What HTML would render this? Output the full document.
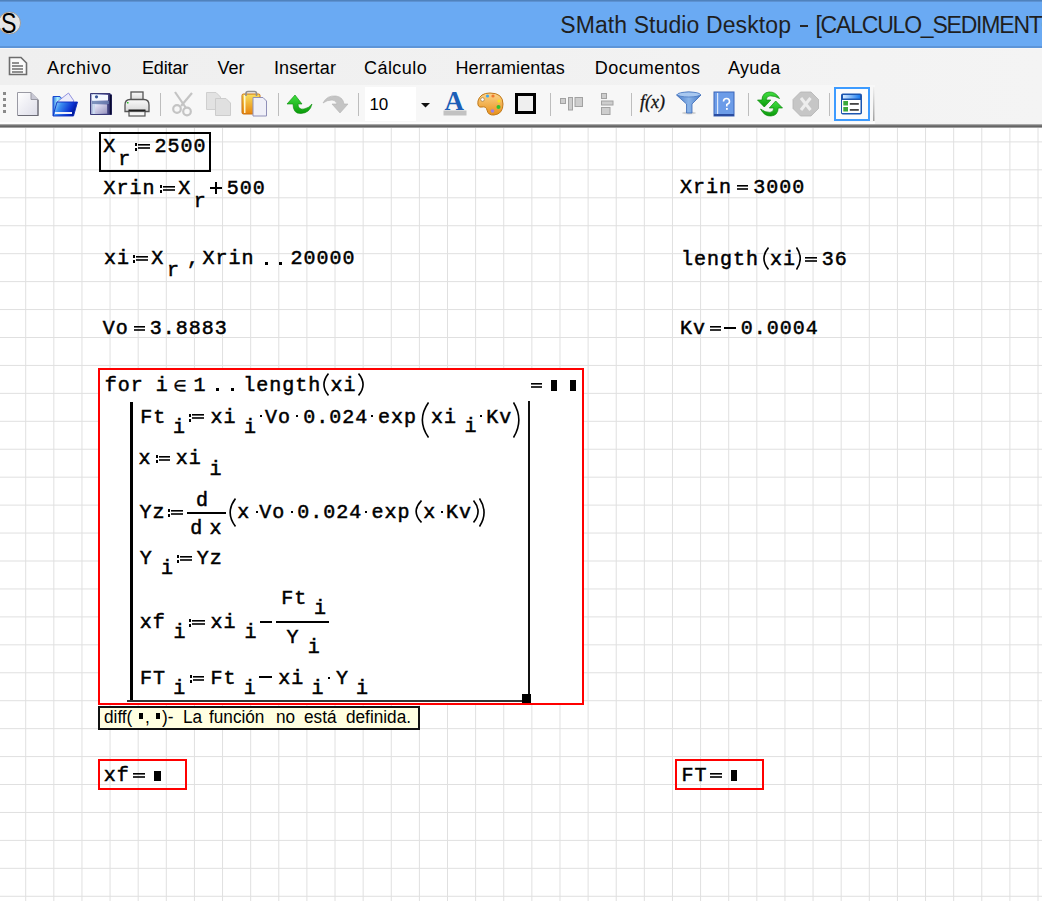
<!DOCTYPE html><html><head><meta charset="utf-8"><style>
html,body{margin:0;padding:0;width:1042px;height:901px;overflow:hidden;background:#fff;position:relative}
.t{position:absolute;white-space:pre}
.m{-webkit-text-stroke:0.5px #000}
.r{position:absolute;box-sizing:content-box}
</style></head><body>
<svg class="r" style="left:0;top:0" width="1042" height="901"><g fill="#e0e0e0"><rect x="25.20" y="128" width="1" height="773"/><rect x="53.32" y="128" width="1" height="773"/><rect x="81.44" y="128" width="1" height="773"/><rect x="109.56" y="128" width="1" height="773"/><rect x="137.68" y="128" width="1" height="773"/><rect x="165.80" y="128" width="1" height="773"/><rect x="193.92" y="128" width="1" height="773"/><rect x="222.04" y="128" width="1" height="773"/><rect x="250.16" y="128" width="1" height="773"/><rect x="278.28" y="128" width="1" height="773"/><rect x="306.40" y="128" width="1" height="773"/><rect x="334.52" y="128" width="1" height="773"/><rect x="362.64" y="128" width="1" height="773"/><rect x="390.76" y="128" width="1" height="773"/><rect x="418.88" y="128" width="1" height="773"/><rect x="447.00" y="128" width="1" height="773"/><rect x="475.12" y="128" width="1" height="773"/><rect x="503.24" y="128" width="1" height="773"/><rect x="531.36" y="128" width="1" height="773"/><rect x="559.48" y="128" width="1" height="773"/><rect x="587.60" y="128" width="1" height="773"/><rect x="615.72" y="128" width="1" height="773"/><rect x="643.84" y="128" width="1" height="773"/><rect x="671.96" y="128" width="1" height="773"/><rect x="700.08" y="128" width="1" height="773"/><rect x="728.20" y="128" width="1" height="773"/><rect x="756.32" y="128" width="1" height="773"/><rect x="784.44" y="128" width="1" height="773"/><rect x="812.56" y="128" width="1" height="773"/><rect x="840.68" y="128" width="1" height="773"/><rect x="868.80" y="128" width="1" height="773"/><rect x="896.92" y="128" width="1" height="773"/><rect x="925.04" y="128" width="1" height="773"/><rect x="953.16" y="128" width="1" height="773"/><rect x="981.28" y="128" width="1" height="773"/><rect x="1009.40" y="128" width="1" height="773"/><rect x="1037.52" y="128" width="1" height="773"/><rect x="0" y="141.40" width="1042" height="1"/><rect x="0" y="169.34" width="1042" height="1"/><rect x="0" y="197.28" width="1042" height="1"/><rect x="0" y="225.22" width="1042" height="1"/><rect x="0" y="253.16" width="1042" height="1"/><rect x="0" y="281.10" width="1042" height="1"/><rect x="0" y="309.04" width="1042" height="1"/><rect x="0" y="336.98" width="1042" height="1"/><rect x="0" y="364.92" width="1042" height="1"/><rect x="0" y="392.86" width="1042" height="1"/><rect x="0" y="420.80" width="1042" height="1"/><rect x="0" y="448.74" width="1042" height="1"/><rect x="0" y="476.68" width="1042" height="1"/><rect x="0" y="504.62" width="1042" height="1"/><rect x="0" y="532.56" width="1042" height="1"/><rect x="0" y="560.50" width="1042" height="1"/><rect x="0" y="588.44" width="1042" height="1"/><rect x="0" y="616.38" width="1042" height="1"/><rect x="0" y="644.32" width="1042" height="1"/><rect x="0" y="672.26" width="1042" height="1"/><rect x="0" y="700.20" width="1042" height="1"/><rect x="0" y="728.14" width="1042" height="1"/><rect x="0" y="756.08" width="1042" height="1"/><rect x="0" y="784.02" width="1042" height="1"/><rect x="0" y="811.96" width="1042" height="1"/><rect x="0" y="839.90" width="1042" height="1"/><rect x="0" y="867.84" width="1042" height="1"/><rect x="0" y="895.78" width="1042" height="1"/></g></svg>
<div class="r" style="left:0px;top:0px;width:1042px;height:47px;background:#6aaaf3;"></div>
<div class="r" style="left:0px;top:0px;width:1042px;height:1px;background:#4f82bd;"></div>
<div class="r" style="left:0px;top:1px;width:1042px;height:1px;background:#5d92d2;"></div>
<div class="r" style="left:0px;top:46px;width:1042px;height:2px;background:#5d95d8;"></div>
<svg class="r" style="left:0;top:11px" width="24" height="24"><circle cx="9.5" cy="12" r="11" fill="#e6e6e6" stroke="#9a8f86" stroke-width="0.8"/></svg>
<span class="t" style="left:1px;top:5.5px;font-family:Liberation Sans;font-size:29px;line-height:34px;color:#000;transform:scaleX(0.8);transform-origin:0 0">S</span>
<span class="t" style="left:560.2px;top:13.5px;font-family:'Liberation Sans', sans-serif;font-size:23px;line-height:23px;letter-spacing:0.1px;color:#1f1f1f;">SMath Studio Desktop</span>
<div class="r" style="left:800px;top:25px;width:8px;height:2px;background:#262626;"></div>
<span class="t" style="left:815.4px;top:13.5px;font-family:'Liberation Sans', sans-serif;font-size:23px;line-height:23px;letter-spacing:-1.2px;color:#1f1f1f;">[CALCULO_SEDIMENTOS.sm]</span>
<div class="r" style="left:0px;top:48px;width:1042px;height:76px;background:#f0f0f0;background:linear-gradient(90deg,#efefef 0%,#f1f1f1 50%,#f4f4f4 100%)"></div>
<div class="r" style="left:0px;top:48px;width:1042px;height:1px;background:#f7f7f7;"></div>
<svg class="r" style="left:8px;top:56px" width="20" height="20"><path d="M1.5,1.5 H13 L18.5,7 V18.5 H1.5 Z" fill="#fafafa" stroke="#6d6d6d" stroke-width="1.6"/><path d="M4,7 H11 M4,10 H15 M4,13 H15 M4,16 H15" stroke="#6d6d6d" stroke-width="1.4"/></svg>
<span class="t" style="left:47.0px;top:59.0px;font-family:'Liberation Sans', sans-serif;font-size:18px;line-height:18px;letter-spacing:0.65px;color:#000;">Archivo</span>
<span class="t" style="left:142.0px;top:59.0px;font-family:'Liberation Sans', sans-serif;font-size:18px;line-height:18px;letter-spacing:-0.15px;color:#000;">Editar</span>
<span class="t" style="left:217.4px;top:59.0px;font-family:'Liberation Sans', sans-serif;font-size:18px;line-height:18px;letter-spacing:0px;color:#000;">Ver</span>
<span class="t" style="left:273.9px;top:59.0px;font-family:'Liberation Sans', sans-serif;font-size:18px;line-height:18px;letter-spacing:0.14px;color:#000;">Insertar</span>
<span class="t" style="left:364.0px;top:59.0px;font-family:'Liberation Sans', sans-serif;font-size:18px;line-height:18px;letter-spacing:0.45px;color:#000;">Cálculo</span>
<span class="t" style="left:455.4px;top:59.0px;font-family:'Liberation Sans', sans-serif;font-size:18px;line-height:18px;letter-spacing:0.12px;color:#000;">Herramientas</span>
<span class="t" style="left:594.8px;top:59.0px;font-family:'Liberation Sans', sans-serif;font-size:18px;line-height:18px;letter-spacing:0.47px;color:#000;">Documentos</span>
<span class="t" style="left:727.9px;top:59.0px;font-family:'Liberation Sans', sans-serif;font-size:18px;line-height:18px;letter-spacing:0.4px;color:#000;">Ayuda</span>
<div class="r" style="left:0px;top:85px;width:875px;height:38px;background:#f7f7f7;"></div>
<div class="r" style="left:0px;top:122px;width:875px;height:2px;background:#fdfdfd;"></div>
<div class="r" style="left:0px;top:124px;width:1042px;height:1px;background:#a8a8a8;"></div>
<div class="r" style="left:0px;top:125px;width:1042px;height:1px;background:#767676;"></div>
<div class="r" style="left:0px;top:126px;width:1042px;height:1px;background:#646464;"></div>
<div class="r" style="left:0px;top:127px;width:1042px;height:1px;background:#a0a0a0;"></div>
<svg class="r" style="left:0;top:0" width="1042" height="127" viewBox="0 0 1042 127">
<defs>
<linearGradient id="gDoc" x1="0" y1="0" x2="1" y2="1"><stop offset="0" stop-color="#ffffff"/><stop offset="1" stop-color="#dcdce8"/></linearGradient>
<linearGradient id="gFold" x1="0" y1="0" x2="1" y2="0.3"><stop offset="0" stop-color="#b8f0ff"/><stop offset="0.35" stop-color="#3a8cf0"/><stop offset="0.8" stop-color="#0a30d0"/><stop offset="1" stop-color="#001890"/></linearGradient><linearGradient id="gBack" x1="0" y1="0" x2="1" y2="0"><stop offset="0" stop-color="#2a70e0"/><stop offset="0.4" stop-color="#a8f0ff"/><stop offset="1" stop-color="#3a90f0"/></linearGradient>
<linearGradient id="gClip" x1="0" y1="0" x2="0" y2="1"><stop offset="0" stop-color="#f8e060"/><stop offset="1" stop-color="#e8840c"/></linearGradient>
<linearGradient id="gGreen" x1="0" y1="0" x2="0" y2="1"><stop offset="0" stop-color="#40e040"/><stop offset="1" stop-color="#0a9a0a"/></linearGradient>
<linearGradient id="gSave" x1="0" y1="0" x2="1" y2="1"><stop offset="0" stop-color="#e8e8fa"/><stop offset="1" stop-color="#9a96c0"/></linearGradient>
<linearGradient id="gFun" x1="0" y1="0" x2="1" y2="0"><stop offset="0" stop-color="#4a7cc8"/><stop offset="0.5" stop-color="#8ab4e8"/><stop offset="1" stop-color="#4a7cc8"/></linearGradient>
<linearGradient id="gPal" x1="0" y1="0" x2="0" y2="1"><stop offset="0" stop-color="#fcd48a"/><stop offset="1" stop-color="#e8901a"/></linearGradient>
<linearGradient id="gWin" x1="0" y1="0" x2="0" y2="1"><stop offset="0" stop-color="#7ab8f8"/><stop offset="1" stop-color="#1a5cc0"/></linearGradient>
</defs>
<!-- grip -->
<g fill="#8a8a8a"><rect x="3" y="92" width="3" height="3"/><rect x="3" y="98" width="3" height="3"/><rect x="3" y="104" width="3" height="3"/><rect x="3" y="110" width="3" height="3"/></g>
<!-- new doc -->
<path d="M17.5,92.5 H31 L38,99.5 V115.5 H17.5 Z" fill="url(#gDoc)" stroke="#9a9aa4" stroke-width="1"/>
<path d="M31,92.5 V99.5 H38" fill="#c8c8d4" stroke="#9a9aa4" stroke-width="1"/>
<path d="M18,115.5 H38 V100" fill="none" stroke="#6a6a74" stroke-width="1.2"/>
<!-- open folder -->
<path d="M53,96.5 H60 L62,99 H64 V115.5 H53 Z" fill="url(#gBack)" stroke="#1848d0" stroke-width="1"/>
<path d="M57,102 L68.5,93 L74,101 L66,108 Z" fill="#ececfa" stroke="#7a7ad8" stroke-width="0.8"/>
<path d="M53,116 L57,102 H77.5 L73.5,116 Z" fill="url(#gFold)" stroke="#0a28c0" stroke-width="0.9"/>
<rect x="55" y="112" width="17" height="2" fill="#f0f0fa"/>
<!-- save -->
<linearGradient id="gFlop" x1="0" y1="0" x2="1" y2="0"><stop offset="0" stop-color="#8a90c0"/><stop offset="0.15" stop-color="#d0e0f4"/><stop offset="0.75" stop-color="#6a6aa8"/><stop offset="1" stop-color="#0a0a40"/></linearGradient>
<path d="M90.5,93.5 H110 L111.5,95 V114.5 H90.5 Z" fill="url(#gFlop)" stroke="#3a3a78" stroke-width="1"/>
<rect x="92" y="95" width="16" height="5.5" fill="#f4f8ff"/>
<circle cx="96.5" cy="96.8" r="1.6" fill="#3a5898"/>
<rect x="92" y="101" width="17" height="3" fill="#6a80b0" opacity="0.8"/>
<rect x="95" y="104.5" width="12" height="9" fill="url(#gSave)"/>
<rect x="110" y="95" width="1.5" height="19.5" fill="#080830"/>
<!-- print -->
<linearGradient id="gPr" x1="0" y1="0" x2="0" y2="1"><stop offset="0" stop-color="#fafafa"/><stop offset="1" stop-color="#d8d8d8"/></linearGradient>
<rect x="131" y="92" width="12" height="8" fill="url(#gPr)" stroke="#555" stroke-width="1.3"/>
<path d="M125,105 Q125,99.5 130,99.5 H144 Q149,99.5 149,105 V111.5 H125 Z" fill="url(#gPr)" stroke="#555" stroke-width="1.3"/>
<rect x="128.5" y="109.5" width="17" height="2.5" fill="#1a1a1a"/>
<rect x="129" y="111.5" width="16" height="4.5" fill="#f6f6f6" stroke="#555" stroke-width="1.2"/>
<rect x="127" y="102" width="1.5" height="1.5" fill="#2ac02a"/>
<!-- sep -->
<rect x="160" y="93" width="1" height="23" fill="#bdbdbd"/>
<!-- scissors (disabled) -->
<g fill="none" stroke="#c4c4c4" stroke-width="2.2">
<path d="M175,92 L186,108"/><path d="M192,93 L181,106"/>
<circle cx="177" cy="109" r="3.8"/><circle cx="187" cy="111.5" r="3.8"/>
</g>
<!-- copy (disabled) -->
<path d="M206.5,92.5 H216 L220.5,97 V109.5 H206.5 Z" fill="#e2e2e2" stroke="#cfcfcf"/>
<path d="M215.5,98.5 H226 L230.5,103 V115.5 H215.5 Z" fill="#e0e0e0" stroke="#cccccc"/>
<!-- paste -->
<rect x="242" y="94" width="18" height="20" rx="1.5" fill="url(#gClip)" stroke="#c87010" stroke-width="1"/>
<rect x="244" y="95" width="1.5" height="18" fill="#fff8d0"/>
<path d="M246,96 V93.5 Q246,91.5 248,91.5 H254.5 Q256.5,91.5 256.5,93.5 V96" fill="none" stroke="#909090" stroke-width="1.6"/>
<path d="M253,97.5 H263 L266.5,101 V116 H253 Z" fill="#f0f0f8" stroke="#9090b8" stroke-width="1"/>
<!-- sep -->
<rect x="278" y="93" width="1" height="23" fill="#bdbdbd"/>
<!-- undo -->
<path d="M287,104 L295,95 L302,104 H298 Q298,110 304,109 Q309,108 312,104 Q310,113 301,113.5 Q293,114 293,104 Z" fill="url(#gGreen)" stroke="#0a8a0a" stroke-width="0.6"/>
<!-- redo (disabled) -->
<path d="M323,103 Q327,95 336,96 Q343,97 344,104 H348 L340,113 L332,104 H337 Q336,100 332,100 Q327,100 323,103 Z" fill="#c4c4c4" stroke="#b4b4b4" stroke-width="0.6"/>
<!-- sep -->
<rect x="358" y="93" width="1" height="23" fill="#bdbdbd"/>
<!-- combobox -->
<rect x="365" y="87" width="70" height="34" fill="#ffffff"/>
<rect x="416" y="87" width="19" height="34" fill="#f7f7f7"/>
<path d="M421,103 H430 L425.5,107.5 Z" fill="#111"/>
<!-- A -->
<text x="444.4" y="110" font-family="Liberation Serif" font-weight="bold" font-size="27" fill="#1c5fb8">A</text>
<rect x="443.5" y="110.5" width="23" height="5" fill="#c2c2c2"/>
<!-- palette -->
<path d="M478,101 Q480,93 490,93 Q503,93 503,104 Q503,114 494,115 Q488,115.5 487,110 Q486,106 482,107 Q477,108 478,101 Z" fill="url(#gPal)" stroke="#c07818" stroke-width="1"/>
<circle cx="482.5" cy="99.5" r="1.8" fill="#fff" stroke="#8a6a40" stroke-width="0.6"/>
<circle cx="487.5" cy="96" r="1.6" fill="#40a8f0"/><circle cx="493" cy="96" r="1.6" fill="#f07830"/>
<circle cx="499" cy="101" r="1.6" fill="#f8e020"/><circle cx="498.5" cy="107" r="2" fill="#30c030"/><circle cx="492.5" cy="111" r="1.8" fill="#a080e0"/>
<!-- border square -->
<rect x="516.5" y="94.5" width="18" height="18" fill="#efefef" stroke="#000" stroke-width="3"/>
<!-- sep -->
<rect x="550" y="93" width="1" height="23" fill="#bdbdbd"/>
<!-- align h -->
<g fill="#cdcdcd" stroke="#a2a2a2" stroke-width="1">
<rect x="560.5" y="98.5" width="5" height="5"/><rect x="568.5" y="97.5" width="4" height="12.5"/><rect x="575" y="97.5" width="7.5" height="9"/>
</g>
<!-- align v -->
<g fill="#cdcdcd" stroke="#a2a2a2" stroke-width="1">
<rect x="601.5" y="93.5" width="5" height="5"/><rect x="601.5" y="101" width="11.5" height="4"/><rect x="601.5" y="107.5" width="8.5" height="7"/>
</g>
<!-- sep -->
<rect x="631" y="93" width="1" height="23" fill="#bdbdbd"/>
<text x="640" y="108" font-family="Liberation Serif" font-style="italic" font-size="18" fill="#111" stroke="#111" stroke-width="0.3">f(x)</text>
<!-- funnel -->
<ellipse cx="689" cy="113" rx="7" ry="1.5" fill="#b8b8b8" opacity="0.6"/>
<path d="M676.5,95 Q688.5,89 701,95 L692,104 V113 H686.5 V104 Z" fill="url(#gFun)" stroke="#3a6ab8" stroke-width="0.8"/>
<ellipse cx="688.8" cy="94.5" rx="11.5" ry="2.5" fill="#a8c8f0" stroke="#4a78c0" stroke-width="0.8"/>
<!-- help -->
<rect x="714" y="92" width="20" height="24" fill="#6c9ce8" stroke="#3a64b8" stroke-width="1"/>
<rect x="714" y="114" width="20" height="2" fill="#2a4ca0"/>
<rect x="717" y="93" width="1.2" height="21" fill="#dce8fc"/>
<path d="M723.5,101.5 Q723.5,98.5 726.5,98.5 Q729.5,98.5 729.5,101.5 Q729.5,103.5 726.8,104.5 V106.5" fill="none" stroke="#fff" stroke-width="1.6"/>
<rect x="726" y="108" width="1.8" height="1.8" fill="#fff"/>
<!-- sep -->
<rect x="748" y="93" width="1" height="23" fill="#bdbdbd"/>
<!-- refresh -->
<path d="M779.5,98.5 Q775.5,91.5 769,92 Q762,92.8 762,100 H757.5 L764.3,107 L770.8,100 H766.2 Q766.3,96 770,95.8 Q775,95.8 779.5,98.5 Z" fill="url(#gGreen)" stroke="#0a8a0a" stroke-width="0.7"/>
<path d="M760.5,109 Q764.5,116.5 771,116 Q778,115.5 778.2,108 H782.5 L775.7,101 L769.3,108 H773.8 Q773.8,112.2 770,112.4 Q765,112.6 760.5,109 Z" fill="url(#gGreen)" stroke="#0a8a0a" stroke-width="0.7"/>
<!-- stop -->
<path d="M800.5,92 H811 L818.5,99.5 V108.5 L811,116 H800.5 L793,108.5 V99.5 Z" fill="#c6c6c6" stroke="#b4b4b4" stroke-width="0.8"/>
<path d="M801,98 L810.5,110 M810.5,98 L801,110" stroke="#ededed" stroke-width="3"/>
<!-- sep -->
<rect x="829" y="93" width="1" height="23" fill="#bdbdbd"/>
<!-- selected button -->
<rect x="835" y="88" width="34" height="32" fill="#fcfcfc" stroke="#3d9bff" stroke-width="2"/>
<linearGradient id="gHdr" x1="0" y1="0" x2="1" y2="0"><stop offset="0" stop-color="#d8ecff"/><stop offset="1" stop-color="#1a7cf0"/></linearGradient>
<rect x="841" y="93.5" width="21" height="21" rx="1.8" fill="#1c56b0"/>
<rect x="843" y="95" width="17" height="3.5" fill="url(#gHdr)"/>
<rect x="842" y="100" width="18.5" height="13" fill="#ffffff"/>
<rect x="843.3" y="101" width="4.7" height="4.5" fill="#3aa83a"/>
<rect x="843.3" y="107" width="4.7" height="4.5" fill="#3aa83a"/>
<rect x="849.8" y="103" width="9" height="1.8" fill="#444"/>
<rect x="849.8" y="109" width="9" height="1.8" fill="#444"/>
<!-- end -->
<linearGradient id="gEnd" x1="0" y1="0" x2="0" y2="1"><stop offset="0" stop-color="#f0f0f0"/><stop offset="1" stop-color="#a0a0a0"/></linearGradient><rect x="873" y="87" width="1.5" height="34" fill="url(#gEnd)"/>
</svg>

<span class="t" style="left:369.4px;top:96.0px;font-family:'Liberation Sans', sans-serif;font-size:17px;line-height:17px;letter-spacing:0px;color:#000;">10</span>
<div class="r" style="left:99px;top:132px;width:108px;height:36px;border:2px solid #000;background:transparent"></div>
<span class="t m" style="left:103.2px;top:137.0px;font-family:'Liberation Mono', monospace;font-size:20px;line-height:20px;letter-spacing:1px;color:#000;">X</span>
<span class="t m" style="left:118.2px;top:150.0px;font-family:'Liberation Mono', monospace;font-size:20px;line-height:20px;letter-spacing:1px;color:#000;">r</span>
<div class="r" style="left:135px;top:143px;width:2px;height:3px;background:#000;"></div>
<div class="r" style="left:135px;top:148px;width:2px;height:3px;background:#000;"></div>
<svg class="r" style="left:138px;top:143px" width="12" height="6"><rect x="0" y="1" width="12" height="1.6" fill="#000"/><rect x="0" y="4.2" width="12" height="1.6" fill="#000"/></svg>
<span class="t m" style="left:154.5px;top:137.0px;font-family:'Liberation Mono', monospace;font-size:20px;line-height:20px;letter-spacing:1px;color:#000;">2500</span>
<span class="t m" style="left:103.5px;top:179.0px;font-family:'Liberation Mono', monospace;font-size:20px;line-height:20px;letter-spacing:1px;color:#000;">Xrin</span>
<div class="r" style="left:160px;top:185px;width:2px;height:3px;background:#000;"></div>
<div class="r" style="left:160px;top:190px;width:2px;height:3px;background:#000;"></div>
<svg class="r" style="left:163px;top:185px" width="12" height="6"><rect x="0" y="1" width="12" height="1.6" fill="#000"/><rect x="0" y="4.2" width="12" height="1.6" fill="#000"/></svg>
<span class="t m" style="left:178.3px;top:179.0px;font-family:'Liberation Mono', monospace;font-size:20px;line-height:20px;letter-spacing:1px;color:#000;">X</span>
<span class="t m" style="left:193.8px;top:191.5px;font-family:'Liberation Mono', monospace;font-size:20px;line-height:20px;letter-spacing:1px;color:#000;">r</span>
<div class="r" style="left:210px;top:187px;width:12px;height:2px;background:#000;"></div>
<div class="r" style="left:215px;top:182px;width:2px;height:12px;background:#000;"></div>
<span class="t m" style="left:226.7px;top:179.0px;font-family:'Liberation Mono', monospace;font-size:20px;line-height:20px;letter-spacing:1px;color:#000;">500</span>
<span class="t m" style="left:104.0px;top:249.0px;font-family:'Liberation Mono', monospace;font-size:20px;line-height:20px;letter-spacing:1px;color:#000;">xi</span>
<div class="r" style="left:133px;top:255px;width:2px;height:3px;background:#000;"></div>
<div class="r" style="left:133px;top:260px;width:2px;height:3px;background:#000;"></div>
<svg class="r" style="left:136px;top:255px" width="12" height="6"><rect x="0" y="1" width="12" height="1.6" fill="#000"/><rect x="0" y="4.2" width="12" height="1.6" fill="#000"/></svg>
<span class="t m" style="left:151.2px;top:249.0px;font-family:'Liberation Mono', monospace;font-size:20px;line-height:20px;letter-spacing:1px;color:#000;">X</span>
<span class="t m" style="left:167.0px;top:260.6px;font-family:'Liberation Mono', monospace;font-size:20px;line-height:20px;letter-spacing:1px;color:#000;">r</span>
<span class="t m" style="left:187.0px;top:249.0px;font-family:'Liberation Mono', monospace;font-size:20px;line-height:20px;letter-spacing:1px;color:#000;">,</span>
<span class="t m" style="left:202.4px;top:249.0px;font-family:'Liberation Mono', monospace;font-size:20px;line-height:20px;letter-spacing:1px;color:#000;">Xrin</span>
<div class="r" style="left:265px;top:262px;width:3px;height:3px;background:#000;"></div>
<div class="r" style="left:279px;top:262px;width:3px;height:3px;background:#000;"></div>
<span class="t m" style="left:290.5px;top:249.0px;font-family:'Liberation Mono', monospace;font-size:20px;line-height:20px;letter-spacing:1px;color:#000;">20000</span>
<span class="t m" style="left:102.7px;top:319.0px;font-family:'Liberation Mono', monospace;font-size:20px;line-height:20px;letter-spacing:1px;color:#000;">Vo</span>
<svg class="r" style="left:134px;top:325px" width="11" height="6"><rect x="0" y="1" width="11" height="1.6" fill="#000"/><rect x="0" y="4.2" width="11" height="1.6" fill="#000"/></svg>
<span class="t m" style="left:149.8px;top:319.0px;font-family:'Liberation Mono', monospace;font-size:20px;line-height:20px;letter-spacing:1px;color:#000;">3.8883</span>
<span class="t m" style="left:680.0px;top:178.0px;font-family:'Liberation Mono', monospace;font-size:20px;line-height:20px;letter-spacing:1px;color:#000;">Xrin</span>
<svg class="r" style="left:737px;top:184px" width="11" height="6"><rect x="0" y="1" width="11" height="1.6" fill="#000"/><rect x="0" y="4.2" width="11" height="1.6" fill="#000"/></svg>
<span class="t m" style="left:753.3px;top:178.0px;font-family:'Liberation Mono', monospace;font-size:20px;line-height:20px;letter-spacing:1px;color:#000;">3000</span>
<span class="t m" style="left:680.9px;top:250.0px;font-family:'Liberation Mono', monospace;font-size:20px;line-height:20px;letter-spacing:1px;color:#000;">length</span>
<svg class="r" style="left:763px;top:247px" width="6" height="23"><path d="M5.5,0.5 Q-3.5999999999999996,11.5 5.5,22.5" fill="none" stroke="#000" stroke-width="1.6"/></svg>
<span class="t m" style="left:769.9px;top:250.0px;font-family:'Liberation Mono', monospace;font-size:20px;line-height:20px;letter-spacing:1px;color:#000;">xi</span>
<svg class="r" style="left:796px;top:247px" width="5" height="23"><path d="M0.5,0.5 Q8.0,11.5 0.5,22.5" fill="none" stroke="#000" stroke-width="1.6"/></svg>
<svg class="r" style="left:805px;top:256px" width="12" height="6"><rect x="0" y="1" width="12" height="1.6" fill="#000"/><rect x="0" y="4.2" width="12" height="1.6" fill="#000"/></svg>
<span class="t m" style="left:821.7px;top:250.0px;font-family:'Liberation Mono', monospace;font-size:20px;line-height:20px;letter-spacing:1px;color:#000;">36</span>
<span class="t m" style="left:680.1px;top:319.0px;font-family:'Liberation Mono', monospace;font-size:20px;line-height:20px;letter-spacing:1px;color:#000;">Kv</span>
<svg class="r" style="left:710px;top:325px" width="11" height="6"><rect x="0" y="1" width="11" height="1.6" fill="#000"/><rect x="0" y="4.2" width="11" height="1.6" fill="#000"/></svg>
<div class="r" style="left:724px;top:327px;width:12px;height:2px;background:#000;"></div>
<span class="t m" style="left:740.8px;top:319.0px;font-family:'Liberation Mono', monospace;font-size:20px;line-height:20px;letter-spacing:1px;color:#000;">0.0004</span>
<div class="r" style="left:98px;top:368px;width:482px;height:333px;border:2px solid #ff0000;background:#fff"></div>
<span class="t m" style="left:104.7px;top:376.0px;font-family:'Liberation Mono', monospace;font-size:20px;line-height:20px;letter-spacing:1px;color:#000;">for</span>
<span class="t m" style="left:155.8px;top:376.0px;font-family:'Liberation Mono', monospace;font-size:20px;line-height:20px;letter-spacing:1px;color:#000;">i</span>
<span class="t m" style="left:173.3px;top:376.0px;font-family:'Liberation Mono', monospace;font-size:20px;line-height:20px;letter-spacing:1px;color:#000;font-family:DejaVu Sans;font-size:15px">∈</span>
<span class="t m" style="left:193.4px;top:376.0px;font-family:'Liberation Mono', monospace;font-size:20px;line-height:20px;letter-spacing:1px;color:#000;">1</span>
<div class="r" style="left:216px;top:388px;width:3px;height:3px;background:#000;"></div>
<div class="r" style="left:231px;top:388px;width:3px;height:3px;background:#000;"></div>
<span class="t m" style="left:243.2px;top:376.0px;font-family:'Liberation Mono', monospace;font-size:20px;line-height:20px;letter-spacing:1px;color:#000;">length</span>
<svg class="r" style="left:323px;top:373px" width="6" height="23"><path d="M5.5,0.5 Q-3.5999999999999996,11.5 5.5,22.5" fill="none" stroke="#000" stroke-width="1.6"/></svg>
<span class="t m" style="left:330.5px;top:376.0px;font-family:'Liberation Mono', monospace;font-size:20px;line-height:20px;letter-spacing:1px;color:#000;">xi</span>
<svg class="r" style="left:358px;top:373px" width="6" height="23"><path d="M0.5,0.5 Q9.600000000000001,11.5 0.5,22.5" fill="none" stroke="#000" stroke-width="1.6"/></svg>
<svg class="r" style="left:531px;top:382px" width="11" height="6"><rect x="0" y="1" width="11" height="1.6" fill="#000"/><rect x="0" y="4.2" width="11" height="1.6" fill="#000"/></svg>
<div class="r" style="left:551px;top:380px;width:6px;height:11px;background:#000;"></div>
<div class="r" style="left:570px;top:380px;width:6px;height:11px;background:#000;"></div>
<div class="r" style="left:130px;top:402px;width:3px;height:300px;background:#000;"></div>
<div class="r" style="left:127px;top:700px;width:401px;height:2px;background:#333;"></div>
<div class="r" style="left:528px;top:401px;width:2px;height:299px;background:#111;"></div>
<div class="r" style="left:522px;top:694px;width:9px;height:9px;background:#000;"></div>
<span class="t m" style="left:140.3px;top:407.5px;font-family:'Liberation Mono', monospace;font-size:20px;line-height:20px;letter-spacing:1px;color:#000;">Ft</span>
<span class="t m" style="left:173.0px;top:418.0px;font-family:'Liberation Mono', monospace;font-size:20px;line-height:20px;letter-spacing:1px;color:#000;">i</span>
<div class="r" style="left:189px;top:413.5px;width:2px;height:3px;background:#000;"></div>
<div class="r" style="left:189px;top:418.5px;width:2px;height:3px;background:#000;"></div>
<svg class="r" style="left:192px;top:413px" width="12" height="6"><rect x="0" y="1" width="12" height="1.6" fill="#000"/><rect x="0" y="4.2" width="12" height="1.6" fill="#000"/></svg>
<span class="t m" style="left:210.4px;top:407.5px;font-family:'Liberation Mono', monospace;font-size:20px;line-height:20px;letter-spacing:1px;color:#000;">xi</span>
<span class="t m" style="left:244.0px;top:418.0px;font-family:'Liberation Mono', monospace;font-size:20px;line-height:20px;letter-spacing:1px;color:#000;">i</span>
<div class="r" style="left:260px;top:415px;width:2px;height:2px;background:#000;"></div>
<span class="t m" style="left:265.0px;top:407.5px;font-family:'Liberation Mono', monospace;font-size:20px;line-height:20px;letter-spacing:1px;color:#000;">Vo</span>
<div class="r" style="left:296px;top:415px;width:2px;height:2px;background:#000;"></div>
<span class="t m" style="left:303.2px;top:407.5px;font-family:'Liberation Mono', monospace;font-size:20px;line-height:20px;letter-spacing:1px;color:#000;">0.024</span>
<div class="r" style="left:371px;top:415px;width:2px;height:2px;background:#000;"></div>
<span class="t m" style="left:378.0px;top:407.5px;font-family:'Liberation Mono', monospace;font-size:20px;line-height:20px;letter-spacing:1px;color:#000;">exp</span>
<svg class="r" style="left:421px;top:402px" width="8" height="36"><path d="M7.5,0.5 Q-4.8,18.0 7.5,35.5" fill="none" stroke="#000" stroke-width="1.6"/></svg>
<span class="t m" style="left:431.0px;top:407.5px;font-family:'Liberation Mono', monospace;font-size:20px;line-height:20px;letter-spacing:1px;color:#000;">xi</span>
<span class="t m" style="left:464.4px;top:417.0px;font-family:'Liberation Mono', monospace;font-size:20px;line-height:20px;letter-spacing:1px;color:#000;">i</span>
<div class="r" style="left:480px;top:415px;width:2px;height:2px;background:#000;"></div>
<span class="t m" style="left:486.3px;top:407.5px;font-family:'Liberation Mono', monospace;font-size:20px;line-height:20px;letter-spacing:1px;color:#000;">Kv</span>
<svg class="r" style="left:513px;top:402px" width="7" height="36"><path d="M0.5,0.5 Q11.200000000000001,18.0 0.5,35.5" fill="none" stroke="#000" stroke-width="1.6"/></svg>
<span class="t m" style="left:138.4px;top:449.0px;font-family:'Liberation Mono', monospace;font-size:20px;line-height:20px;letter-spacing:1px;color:#000;">x</span>
<div class="r" style="left:156px;top:455px;width:2px;height:3px;background:#000;"></div>
<div class="r" style="left:156px;top:460px;width:2px;height:3px;background:#000;"></div>
<svg class="r" style="left:159px;top:455px" width="11" height="6"><rect x="0" y="1" width="11" height="1.6" fill="#000"/><rect x="0" y="4.2" width="11" height="1.6" fill="#000"/></svg>
<span class="t m" style="left:175.8px;top:449.0px;font-family:'Liberation Mono', monospace;font-size:20px;line-height:20px;letter-spacing:1px;color:#000;">xi</span>
<span class="t m" style="left:209.4px;top:459.5px;font-family:'Liberation Mono', monospace;font-size:20px;line-height:20px;letter-spacing:1px;color:#000;">i</span>
<span class="t m" style="left:139.4px;top:503.0px;font-family:'Liberation Mono', monospace;font-size:20px;line-height:20px;letter-spacing:1px;color:#000;">Yz</span>
<div class="r" style="left:168px;top:509px;width:2px;height:3px;background:#000;"></div>
<div class="r" style="left:168px;top:514px;width:2px;height:3px;background:#000;"></div>
<svg class="r" style="left:171px;top:509px" width="12" height="6"><rect x="0" y="1" width="12" height="1.6" fill="#000"/><rect x="0" y="4.2" width="12" height="1.6" fill="#000"/></svg>
<div class="r" style="left:187px;top:512px;width:39px;height:2px;background:#000;"></div>
<span class="t m" style="left:196.0px;top:491.2px;font-family:'Liberation Mono', monospace;font-size:20px;line-height:20px;letter-spacing:1px;color:#000;">d</span>
<span class="t m" style="left:190.2px;top:518.7px;font-family:'Liberation Mono', monospace;font-size:20px;line-height:20px;letter-spacing:1px;color:#000;">d</span>
<span class="t m" style="left:209.4px;top:518.7px;font-family:'Liberation Mono', monospace;font-size:20px;line-height:20px;letter-spacing:1px;color:#000;">x</span>
<svg class="r" style="left:229px;top:498px" width="7" height="29"><path d="M6.5,0.5 Q-4.2,14.5 6.5,28.5" fill="none" stroke="#000" stroke-width="1.6"/></svg>
<span class="t m" style="left:237.2px;top:503.0px;font-family:'Liberation Mono', monospace;font-size:20px;line-height:20px;letter-spacing:1px;color:#000;">x</span>
<div class="r" style="left:256px;top:511px;width:2px;height:2px;background:#000;"></div>
<span class="t m" style="left:259.3px;top:503.0px;font-family:'Liberation Mono', monospace;font-size:20px;line-height:20px;letter-spacing:1px;color:#000;">Vo</span>
<div class="r" style="left:291px;top:511px;width:2px;height:2px;background:#000;"></div>
<span class="t m" style="left:297.2px;top:503.0px;font-family:'Liberation Mono', monospace;font-size:20px;line-height:20px;letter-spacing:1px;color:#000;">0.024</span>
<div class="r" style="left:365px;top:511px;width:2px;height:2px;background:#000;"></div>
<span class="t m" style="left:371.6px;top:503.0px;font-family:'Liberation Mono', monospace;font-size:20px;line-height:20px;letter-spacing:1px;color:#000;">exp</span>
<svg class="r" style="left:415px;top:500px" width="7" height="23"><path d="M6.5,0.5 Q-4.2,11.5 6.5,22.5" fill="none" stroke="#000" stroke-width="1.6"/></svg>
<span class="t m" style="left:423.2px;top:503.0px;font-family:'Liberation Mono', monospace;font-size:20px;line-height:20px;letter-spacing:1px;color:#000;">x</span>
<div class="r" style="left:441px;top:511px;width:2px;height:2px;background:#000;"></div>
<span class="t m" style="left:446.0px;top:503.0px;font-family:'Liberation Mono', monospace;font-size:20px;line-height:20px;letter-spacing:1px;color:#000;">Kv</span>
<svg class="r" style="left:473px;top:500px" width="6" height="23"><path d="M0.5,0.5 Q9.600000000000001,11.5 0.5,22.5" fill="none" stroke="#000" stroke-width="1.6"/></svg>
<svg class="r" style="left:479px;top:498px" width="6" height="29"><path d="M0.5,0.5 Q9.600000000000001,14.5 0.5,28.5" fill="none" stroke="#000" stroke-width="1.6"/></svg>
<span class="t m" style="left:139.8px;top:548.5px;font-family:'Liberation Mono', monospace;font-size:20px;line-height:20px;letter-spacing:1px;color:#000;">Y</span>
<span class="t m" style="left:161.0px;top:559.0px;font-family:'Liberation Mono', monospace;font-size:20px;line-height:20px;letter-spacing:1px;color:#000;">i</span>
<div class="r" style="left:177px;top:554.5px;width:2px;height:3px;background:#000;"></div>
<div class="r" style="left:177px;top:559.5px;width:2px;height:3px;background:#000;"></div>
<svg class="r" style="left:180px;top:555px" width="12" height="6"><rect x="0" y="1" width="12" height="1.6" fill="#000"/><rect x="0" y="4.2" width="12" height="1.6" fill="#000"/></svg>
<span class="t m" style="left:196.8px;top:548.5px;font-family:'Liberation Mono', monospace;font-size:20px;line-height:20px;letter-spacing:1px;color:#000;">Yz</span>
<span class="t m" style="left:139.8px;top:613.0px;font-family:'Liberation Mono', monospace;font-size:20px;line-height:20px;letter-spacing:1px;color:#000;">xf</span>
<span class="t m" style="left:173.6px;top:622.8px;font-family:'Liberation Mono', monospace;font-size:20px;line-height:20px;letter-spacing:1px;color:#000;">i</span>
<div class="r" style="left:189px;top:619px;width:2px;height:3px;background:#000;"></div>
<div class="r" style="left:189px;top:624px;width:2px;height:3px;background:#000;"></div>
<svg class="r" style="left:192px;top:619px" width="13" height="6"><rect x="0" y="1" width="13" height="1.6" fill="#000"/><rect x="0" y="4.2" width="13" height="1.6" fill="#000"/></svg>
<span class="t m" style="left:210.6px;top:613.0px;font-family:'Liberation Mono', monospace;font-size:20px;line-height:20px;letter-spacing:1px;color:#000;">xi</span>
<span class="t m" style="left:244.4px;top:622.8px;font-family:'Liberation Mono', monospace;font-size:20px;line-height:20px;letter-spacing:1px;color:#000;">i</span>
<div class="r" style="left:260px;top:621px;width:12px;height:2px;background:#000;"></div>
<div class="r" style="left:276px;top:621px;width:53px;height:2px;background:#000;"></div>
<span class="t m" style="left:281.3px;top:588.6px;font-family:'Liberation Mono', monospace;font-size:20px;line-height:20px;letter-spacing:1px;color:#000;">Ft</span>
<span class="t m" style="left:314.0px;top:599.2px;font-family:'Liberation Mono', monospace;font-size:20px;line-height:20px;letter-spacing:1px;color:#000;">i</span>
<span class="t m" style="left:286.6px;top:627.7px;font-family:'Liberation Mono', monospace;font-size:20px;line-height:20px;letter-spacing:1px;color:#000;">Y</span>
<span class="t m" style="left:307.7px;top:638.2px;font-family:'Liberation Mono', monospace;font-size:20px;line-height:20px;letter-spacing:1px;color:#000;">i</span>
<span class="t m" style="left:140.0px;top:668.5px;font-family:'Liberation Mono', monospace;font-size:20px;line-height:20px;letter-spacing:1px;color:#000;">FT</span>
<span class="t m" style="left:173.2px;top:679.0px;font-family:'Liberation Mono', monospace;font-size:20px;line-height:20px;letter-spacing:1px;color:#000;">i</span>
<div class="r" style="left:190px;top:674.5px;width:2px;height:3px;background:#000;"></div>
<div class="r" style="left:190px;top:679.5px;width:2px;height:3px;background:#000;"></div>
<svg class="r" style="left:193px;top:675px" width="11" height="6"><rect x="0" y="1" width="11" height="1.6" fill="#000"/><rect x="0" y="4.2" width="11" height="1.6" fill="#000"/></svg>
<span class="t m" style="left:210.6px;top:668.5px;font-family:'Liberation Mono', monospace;font-size:20px;line-height:20px;letter-spacing:1px;color:#000;">Ft</span>
<span class="t m" style="left:243.7px;top:679.0px;font-family:'Liberation Mono', monospace;font-size:20px;line-height:20px;letter-spacing:1px;color:#000;">i</span>
<div class="r" style="left:259px;top:676px;width:13px;height:2px;background:#000;"></div>
<span class="t m" style="left:278.3px;top:668.5px;font-family:'Liberation Mono', monospace;font-size:20px;line-height:20px;letter-spacing:1px;color:#000;">xi</span>
<span class="t m" style="left:311.4px;top:679.0px;font-family:'Liberation Mono', monospace;font-size:20px;line-height:20px;letter-spacing:1px;color:#000;">i</span>
<div class="r" style="left:328px;top:677px;width:2px;height:2px;background:#000;"></div>
<span class="t m" style="left:335.9px;top:668.5px;font-family:'Liberation Mono', monospace;font-size:20px;line-height:20px;letter-spacing:1px;color:#000;">Y</span>
<span class="t m" style="left:356.0px;top:679.0px;font-family:'Liberation Mono', monospace;font-size:20px;line-height:20px;letter-spacing:1px;color:#000;">i</span>
<div class="r" style="left:98px;top:706px;width:318px;height:20px;border:2px solid #111;background:#ffffe1"></div>
<span class="t" style="left:104.2px;top:708.3px;font-family:'Liberation Sans', sans-serif;font-size:18px;line-height:18px;letter-spacing:0px;color:#000;transform:scaleX(0.955);transform-origin:0 0">diff(</span>
<span class="t" style="left:145.0px;top:708.3px;font-family:'Liberation Sans', sans-serif;font-size:18px;line-height:18px;letter-spacing:0px;color:#000;transform:scaleX(0.955);transform-origin:0 0">,</span>
<span class="t" style="left:161.8px;top:708.3px;font-family:'Liberation Sans', sans-serif;font-size:18px;line-height:18px;letter-spacing:0px;color:#000;transform:scaleX(0.955);transform-origin:0 0">)-</span>
<span class="t" style="left:182.6px;top:708.3px;font-family:'Liberation Sans', sans-serif;font-size:18px;line-height:18px;letter-spacing:0px;color:#000;transform:scaleX(0.955);transform-origin:0 0">La</span>
<span class="t" style="left:209.4px;top:708.3px;font-family:'Liberation Sans', sans-serif;font-size:18px;line-height:18px;letter-spacing:0px;color:#000;transform:scaleX(0.955);transform-origin:0 0">función</span>
<span class="t" style="left:276.2px;top:708.3px;font-family:'Liberation Sans', sans-serif;font-size:18px;line-height:18px;letter-spacing:0px;color:#000;transform:scaleX(0.955);transform-origin:0 0">no</span>
<span class="t" style="left:304.0px;top:708.3px;font-family:'Liberation Sans', sans-serif;font-size:18px;line-height:18px;letter-spacing:0px;color:#000;transform:scaleX(0.955);transform-origin:0 0">está</span>
<span class="t" style="left:346.4px;top:708.3px;font-family:'Liberation Sans', sans-serif;font-size:18px;line-height:18px;letter-spacing:0px;color:#000;transform:scaleX(0.955);transform-origin:0 0">definida.</span>
<div class="r" style="left:139px;top:713px;width:4px;height:6px;background:#000;"></div>
<div class="r" style="left:156px;top:713px;width:4px;height:6px;background:#000;"></div>
<div class="r" style="left:98px;top:759px;width:85px;height:27px;border:2px solid #ff0000;background:transparent"></div>
<span class="t m" style="left:103.8px;top:766.0px;font-family:'Liberation Mono', monospace;font-size:20px;line-height:20px;letter-spacing:1px;color:#000;">xf</span>
<svg class="r" style="left:133px;top:772px" width="12" height="6"><rect x="0" y="1" width="12" height="1.6" fill="#000"/><rect x="0" y="4.2" width="12" height="1.6" fill="#000"/></svg>
<div class="r" style="left:154px;top:771px;width:7px;height:10px;background:#000;"></div>
<div class="r" style="left:675px;top:759px;width:85px;height:27px;border:2px solid #ff0000;background:transparent"></div>
<span class="t m" style="left:681.4px;top:766.0px;font-family:'Liberation Mono', monospace;font-size:20px;line-height:20px;letter-spacing:1px;color:#000;">FT</span>
<svg class="r" style="left:710px;top:772px" width="12" height="6"><rect x="0" y="1" width="12" height="1.6" fill="#000"/><rect x="0" y="4.2" width="12" height="1.6" fill="#000"/></svg>
<div class="r" style="left:731px;top:770px;width:6px;height:11px;background:#000;"></div>
</body></html>
